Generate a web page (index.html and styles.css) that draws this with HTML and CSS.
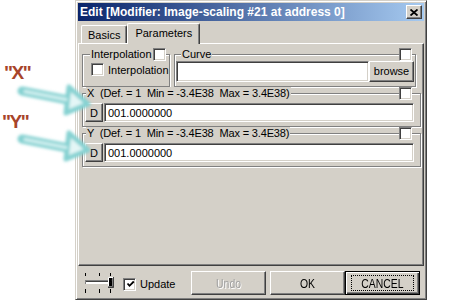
FILE: index.html
```html
<!DOCTYPE html>
<html>
<head>
<meta charset="utf-8">
<link rel="stylesheet" href="styles.css">
</head>
<body>
<div class="page">
  <div class="annot">
    <div class="tag tag-x">"X"</div>
    <div class="tag tag-y">"Y"</div>
  </div>
  <div class="dialog">
    <div class="titlebar">
      <span class="title">Edit [Modifier: Image-scaling #21 at address 0]</span>
      <span class="close btn"><svg width="8" height="7" viewBox="0 0 8 7"><path d="M0.5 0.5 L7.5 6.5 M7.5 0.5 L0.5 6.5" stroke="#000" stroke-width="1.8"/></svg></span>
    </div>
    <div class="tabs">
      <div class="tab">Basics</div>
      <div class="tab sel">Parameters</div>
    </div>
    <div class="panel">
      <div class="row1">
        <div class="grp interp">
          <div class="ghead"><span class="glabel">Interpolation</span><span class="cb"></span></div>
          <div class="cbrow"><span class="cb"></span><span class="cblabel">Interpolation</span></div>
        </div>
        <div class="grp curve">
          <div class="ghead"><span class="glabel">Curve</span><span class="cb"></span></div>
          <div class="crow"><div class="field wide"></div><div class="btn browse">browse</div></div>
        </div>
      </div>
      <div class="grp param">
        <div class="ghead"><span class="glabel pre">X  (Def. = 1  Min = -3.4E38  Max = 3.4E38)</span><span class="cb"></span></div>
        <div class="prow"><div class="btn dbtn">D</div><div class="field val">001.0000000</div></div>
      </div>
      <div class="grp param">
        <div class="ghead"><span class="glabel pre">Y  (Def. = 1  Min = -3.4E38  Max = 3.4E38)</span><span class="cb"></span></div>
        <div class="prow"><div class="btn dbtn">D</div><div class="field val">001.0000000</div></div>
      </div>
    </div>
    <div class="bar">
      <svg class="slider" width="31" height="22" viewBox="0 0 31 22">
        <path d="M2.5 0 V3 M16.5 0 V3 M27.5 0 V3 M2.5 16 V20 M16.5 16 V20 M27.5 16 V20" stroke="#000" stroke-width="1"/>
        <rect x="2" y="7" width="24" height="5" fill="#fff"/>
        <path d="M2 7.5 H26 M2.5 7 V12" stroke="#808080"/>
        <path d="M3 8.5 H26" stroke="#404040"/>
        <path d="M2 11.5 H26" stroke="#d4d0c8"/>
        <rect x="25" y="4" width="6" height="11" fill="#d4d0c8"/>
        <path d="M25.5 15 V4.5 H30" stroke="#fff"/>
        <path d="M25 14.5 H30.5 V4" stroke="#404040"/>
        <path d="M26 13.5 H29.5 V5" stroke="#808080"/>
      </svg>
      <span class="cb checked"><svg width="9" height="9" viewBox="0 0 9 9"><path d="M1.5 3.5 L3.5 5.8 L7.8 1.5" stroke="#000" stroke-width="1.8" fill="none"/></svg></span>
      <span class="uplabel">Update</span>
      <div class="btn bbtn undo"><span class="narrow">Undo</span></div>
      <div class="btn bbtn ok"><span class="narrow">OK</span></div>
      <div class="btn bbtn cancel"><span class="focus"><span class="narrow">CANCEL</span></span></div>
    </div>
  </div>
  <svg class="arrows" width="473" height="303" viewBox="0 0 473 303">
    <defs>
      <filter id="glow" x="-30%" y="-60%" width="160%" height="220%"><feGaussianBlur stdDeviation="1.4"/></filter>
    </defs>
    <g filter="url(#glow)">
      <path d="M22 91 L68 100" stroke="#86d2d2" stroke-width="9" stroke-linecap="round"/>
      <path d="M69 87 L66 113 L88 104 Z" fill="#e4f6f6" stroke="#86d2d2" stroke-width="5" stroke-linejoin="round"/>
      <path d="M25 91.5 L66 99.5" stroke="#d6f2f2" stroke-width="3" stroke-linecap="round"/>
      <path d="M22 139 L68 148" stroke="#86d2d2" stroke-width="9" stroke-linecap="round"/>
      <path d="M69 133 L66 159 L88 150 Z" fill="#e4f6f6" stroke="#86d2d2" stroke-width="5" stroke-linejoin="round"/>
      <path d="M25 139.5 L66 147.5" stroke="#d6f2f2" stroke-width="3" stroke-linecap="round"/>
    </g>
  </svg>
</div>
</body>
</html>
```
FILE: styles.css
```css
* { box-sizing: border-box; }
html, body { margin: 0; padding: 0; background: #fff; }
body { width: 473px; height: 303px; overflow: hidden; font-family: "Liberation Sans", Arial, sans-serif; font-size: 11px; color: #000; }
.page { position: relative; display: flex; width: 473px; height: 303px; }

.annot { width: 75px; display: flex; flex-direction: column; }
.tag { font-family: "Liberation Sans", Arial, sans-serif; font-weight: bold; font-size: 19px; line-height: 18px; letter-spacing: -1.5px; color: #a8442a; }
.tag-x { margin: 64px 0 0 4px; }
.tag-y { margin: 31px 0 0 2px; }

.dialog { width: 352px; height: 300px; background: #d4d0c8; border: 1px solid; border-color: #d4d0c8 #404040 #404040 #d4d0c8; box-shadow: inset 1px 1px #fff, inset -1px -1px #808080; padding: 2px; display: flex; flex-direction: column; }

.titlebar { height: 18px; background: linear-gradient(to right, #0a246a, #a6caf0); display: flex; align-items: center; justify-content: space-between; padding: 0 2px 0 2px; }
.title { color: #fff; font-weight: bold; font-size: 12px; white-space: nowrap; }
.btn { background: #d4d0c8; border: 1px solid; border-color: #fff #404040 #404040 #fff; box-shadow: inset -1px -1px #808080; display: flex; align-items: center; justify-content: center; }
.close { width: 16px; height: 14px; }

.tabs { height: 22px; display: flex; align-items: flex-end; padding-left: 3px; }
.tab { height: 18px; padding: 0 6px; border: 1px solid #fff; border-right-color: #404040; border-bottom: none; border-radius: 2px 2px 0 0; box-shadow: inset -1px 0 #808080; display: flex; align-items: center; }
.tab.sel { height: 21px; margin-bottom: -1px; padding: 0 7px 2px 7px; background: #d4d0c8; position: relative; z-index: 1; }

.panel { height: 223px; border: 1px solid; border-color: #fff #404040 #404040 #fff; box-shadow: inset -1px -1px #808080; padding: 10px 2px 0 3px; display: flex; flex-direction: column; gap: 6px; }

.grp { border: 1px solid #808080; box-shadow: inset 1px 1px #fff, 1px 1px #fff; display: flex; flex-direction: column; }
.ghead { height: 13px; margin-top: -7px; display: flex; align-items: center; justify-content: space-between; padding: 0 5px 0 7px; }
.glabel { background: #d4d0c8; padding: 0 1px; line-height: 13px; }
.pre { white-space: pre; letter-spacing: -0.15px; }

.cb { width: 13px; height: 13px; background: #fff; border: 1px solid; border-color: #808080 #fff #fff #808080; box-shadow: inset 1px 1px #404040, inset -1px -1px #d4d0c8; display: inline-flex; align-items: center; justify-content: center; flex: none; }
.cb svg { margin: 1px 0 0 1px; }

.row1 { display: flex; gap: 4px; height: 33px; padding-right: 5px; }
.interp { width: 88px; }
.interp .ghead { padding: 0 5px 0 7px; }
.cbrow { display: flex; align-items: center; gap: 4px; margin-top: 2px; padding-left: 8px; }
.curve { flex: 1; }
.curve .ghead { padding: 0 3px 0 6px; }
.crow { display: flex; padding: 0 1px; height: 21px; }

.field { background: #fff; border: 1px solid; border-color: #808080 #fff #fff #808080; box-shadow: inset 1px 1px #404040, inset -1px -1px #d4d0c8; }
.wide { flex: 1; }
.browse { width: 45px; padding-bottom: 1px; }

.param { height: 34px; }
.param .ghead { padding: 0 8px 0 3px; }
.prow { display: flex; gap: 1px; margin-top: 3px; padding: 0 6px 0 2px; height: 19px; }
.dbtn { width: 18px; }
.val { flex: 1; display: flex; align-items: center; padding-left: 3px; }

.bar { flex: 1; display: flex; align-items: center; padding: 3px 4px 0 5px; }
.slider { margin-right: 9px; margin-top: 1px; }
.cb.checked { margin-top: 2px; }
.uplabel { margin-left: 4px; margin-top: 2px; }
.bbtn { width: 75px; height: 24px; font-size: 13px; }
.narrow { display: inline-block; transform: scaleX(0.8); }
.undo { margin-left: auto; margin-right: 4px; color: #a0a0a0; text-shadow: 1px 1px #fff; }
.cancel { border: 1px solid #000; box-shadow: inset 1px 1px #fff, inset -1px -1px #404040, inset -2px -2px #808080; }
.focus { width: 63px; height: 16px; border: 1px dotted #000; display: flex; align-items: center; justify-content: center; }

.arrows { position: absolute; left: 0; top: 0; pointer-events: none; }
```
